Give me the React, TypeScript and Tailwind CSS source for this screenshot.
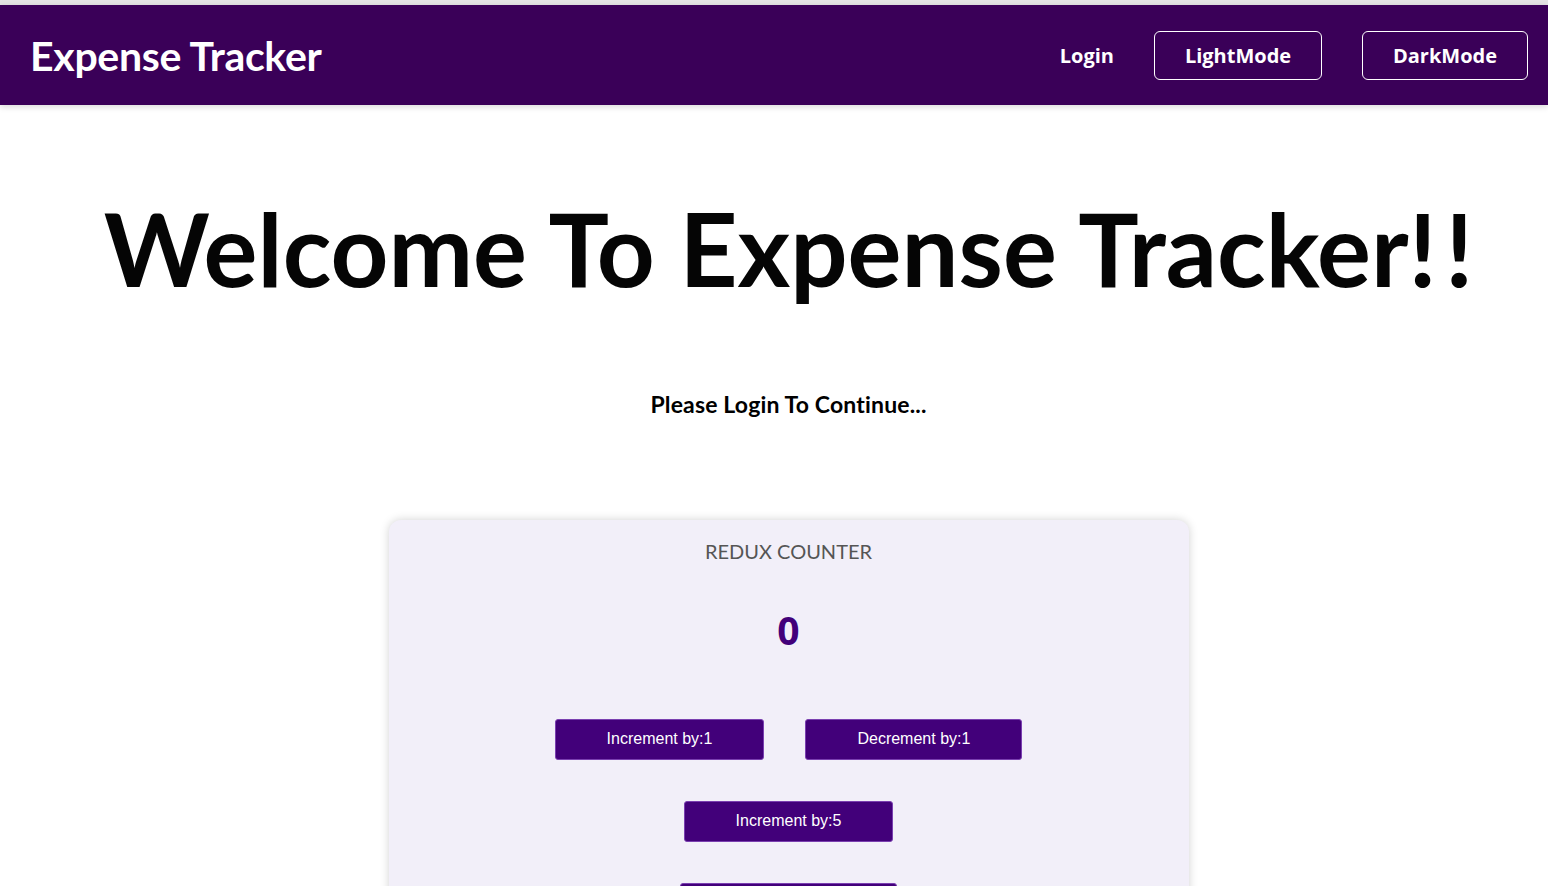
import React from 'react';

const buttons = [['Increment by:1', 'Decrement by:1'], ['Increment by:5'], ['Decrement by:5']];

export default function App() {
  return (
    <div className="min-h-[886px] bg-white font-['Lato',sans-serif] border-t-[5px] border-[#e4e4e4]">
      <nav className="h-[100px] bg-[#3a0058] flex items-center justify-between pl-[30px] pr-5 shadow-[0_2px_6px_rgba(0,0,0,0.15)]">
        <h1 className="text-[41px] font-bold text-white tracking-[-0.3px] mt-[2px]">Expense Tracker</h1>
        <div className="flex items-center gap-10 font-['Open_Sans',sans-serif] text-[20px] font-bold text-white">
          <span className="mt-[2px]">Login</span>
          <button className="w-[168px] h-[49px] pt-[2px] rounded-[6px] border border-white">LightMode</button>
          <button className="w-[166px] h-[49px] pt-[2px] rounded-[6px] border border-white">DarkMode</button>
        </div>
      </nav>

      <main className="flex flex-col items-center pl-[29px]">
        <h2 className="mt-[83px] text-[101px] leading-[120px] font-bold text-[#050505]">
          Welcome To Expense Tracker!<span className="ml-[8px]">!</span>
        </h2>
        <p className="mt-[79px] text-[23px] tracking-[0.15px] font-bold text-black">Please Login To Continue...</p>

        <section className="mt-[98px] w-[800px] bg-[#f2eff9] rounded-[12px] shadow-[0_0_10px_rgba(0,0,0,0.18)] flex flex-col items-center pt-[16px] pb-10">
          <h3 className="text-[20px] text-[#555]">REDUX COUNTER</h3>
          <div className="mt-[38px] font-['Open_Sans',sans-serif] text-[39px] font-bold text-[#42007a] leading-[52px]">0</div>
          <div className="mt-[15px] flex flex-col items-center">
            {buttons.map((row, i) => (
              <div key={i} className="flex gap-[41px] mt-[41px] first:mt-[48px]">
                {row.map((label) => (
                  <button
                    key={label}
                    className="h-[41px] px-[51px] rounded-[3px] border border-[#7a3fb0] bg-[#42007a] text-white text-[16px] font-['Liberation_Sans',Arial,sans-serif]"
                  >
                    {label}
                  </button>
                ))}
              </div>
            ))}
          </div>
        </section>
      </main>
    </div>
  );
}
